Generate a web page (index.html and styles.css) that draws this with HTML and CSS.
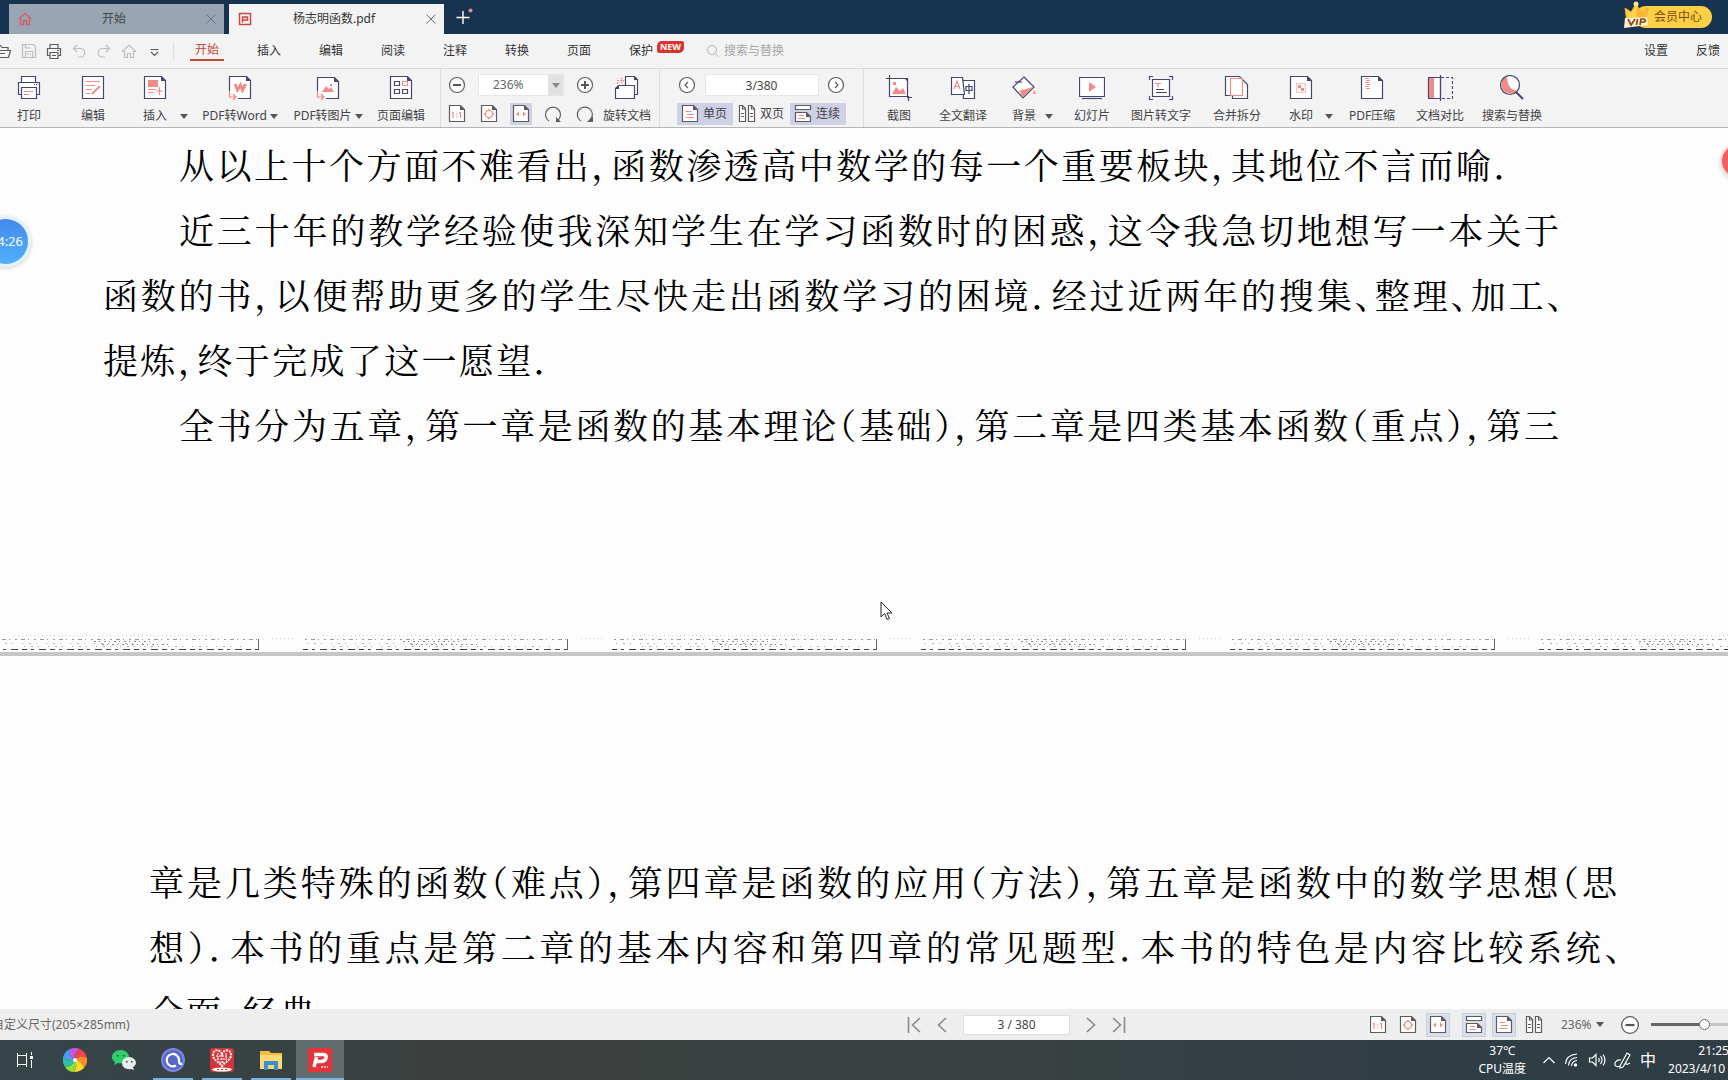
FILE: index.html
```html
<!DOCTYPE html>
<html lang="zh-CN">
<head>
<meta charset="utf-8">
<title>杨志明函数.pdf</title>
<link rel="stylesheet" href="styles.css">
</head>
<body>
<svg class="defs" aria-hidden="true">
  <symbol id="fit-one" viewBox="0 0 18 20"><path class="w g" d="M1.5 1.500h11l4 4v12h-15z"/><path class="gf" d="M12 1v5h5z"/><path class="r" d="M5 8v6M4 9l1-1M12.500 8v6M11.500 9l1-1M8.700 9.500v1M8.700 12.500v1"/></symbol>
  <symbol id="fit-page" viewBox="0 0 18 20"><path class="w g" d="M1.500 1.500h11l4 4v12h-15z"/><path class="gf" d="M12 1v5h5z"/><circle class="r" cx="9" cy="10" r="3.500"/><path class="rf" d="M9 4.500l1.500 2h-3zM9 15.500l1.500-2h-3zM3.500 10l2-1.500v3zM14.500 10l-2-1.500v3z"/></symbol>
  <symbol id="fit-width" viewBox="0 0 18 20"><path class="w g" d="M1.500 1.500h11l4 4v12h-15z"/><path class="gf" d="M12 1v5h5z"/><path class="rf" d="M4 10l3-2.500v5zM14 10l-3-2.500v5z"/></symbol>
  <symbol id="single" viewBox="0 0 18 20"><path class="w g" d="M1.500 1.500h11l4 4v12h-15z"/><path class="gf" d="M12 1v5h5z"/><path class="r" d="M4.500 7.500h6M6 10.500h7M4.500 13.500h8"/></symbol>
  <symbol id="double" viewBox="0 0 18 20"><path class="w g" d="M1.500 1.500h3l3 3v13h-6zM10.500 1.500h3l3 3v13h-6z"/><path class="g" d="M4.500 2v3h3M13.500 2v3h3M3 9.500h3M3 12.500h3M12 9.500h3M12 12.500h3"/></symbol>
  <symbol id="continuous" viewBox="0 0 18 20"><path class="w g" d="M1.500 1.500h15v4h-15zM1.500 8.500h11l4 4v5h-15z"/><path class="gf" d="M12 8v5h5z"/><path class="r" d="M5 11.500h5M4 14.500h7"/></symbol>
  <symbol id="minus" viewBox="0 0 18 18"><circle class="w g" cx="9" cy="9" r="7.500"/><path class="g2" d="M5 9h8"/></symbol>
  <symbol id="plus" viewBox="0 0 18 18"><circle class="w g" cx="9" cy="9" r="7.500"/><path class="g2" d="M5 9h8M9 5v8"/></symbol>
  <symbol id="prev" viewBox="0 0 18 18"><circle class="w g" cx="9" cy="9" r="7.500"/><path class="g" d="M10 6L7 9l3 3"/></symbol>
  <symbol id="next" viewBox="0 0 18 18"><circle class="w g" cx="9" cy="9" r="7.500"/><path class="g" d="M8 6l3 3-3 3"/></symbol>
  <symbol id="close" viewBox="0 0 10 10"><path d="M.5.500l9 9M9.500.500l-9 9" fill="none" stroke="#6a7078"/></symbol>
</svg>

<header class="titlebar">
  <div class="doc-tab doc-tab--home">
    <svg class="doc-tab-icon" viewBox="0 0 14 14"><path d="M1 6.500L7 1.500l6 5M2.500 5.500v7h3v-4h3v4h3v-7" fill="none" stroke="#d8596a" stroke-width="1.300"/></svg>
    <span class="doc-tab-title">开始</span>
    <button class="plain" aria-label="关闭"><svg width="10" height="10"><use href="#close"/></svg></button>
  </div>
  <div class="doc-tab doc-tab--active">
    <svg class="doc-tab-icon" viewBox="0 0 14 14"><rect x="1.500" y="1.500" width="11" height="11" fill="none" stroke="#c94a42" stroke-width="1.500"/><path d="M4.500 10.500v-5.500h5v3h-5" fill="none" stroke="#c94a42" stroke-width="1.500"/></svg>
    <span class="doc-tab-title">杨志明函数.pdf</span>
    <button class="plain" aria-label="关闭"><svg width="10" height="10"><use href="#close"/></svg></button>
  </div>
  <button class="plain new-tab" aria-label="新建标签"><svg width="18" height="18" viewBox="0 0 18 18"><path d="M8 3v13M1.500 9.500h13" stroke="#fff" stroke-width="1.400"/><circle cx="15.500" cy="2.500" r="2" fill="#e58b92"/></svg></button>
  <button class="vip">
    <svg class="vip-crown" viewBox="0 0 26 28"><path d="M2 7l6 4 5-8 5 8 7-4-3 14H4z" fill="#ffd24a" stroke="#f4a92c"/><circle cx="13" cy="3" r="2.500" fill="#ffe48a"/><path d="M14 4l4 8 6-3-3 9h-8z" fill="#f7b734"/><path d="M2 17l22-1 1 8-24 3z" fill="#fff1d6"/><path d="M5 18l3 6 4-6M14.500 18l-1 6M17 24l1-6h3q3 2 0 3h-3" fill="none" stroke="#8a4a12" stroke-width="1.700"/></svg>
    会员中心
  </button>
</header>

<nav class="menubar">
  <div class="quick">
    <button class="plain" aria-label="打开"><svg width="18" height="18" viewBox="0 0 18 18"><path class="g" d="M1.500 15V3.500h5l1.500 2h6V8M1.500 15.500L5 8.500h11.500l-2 7zM6 11.500h5"/></svg></button>
    <button class="plain faded" aria-label="保存"><svg width="16" height="18" viewBox="0 0 16 18"><path class="g" d="M1.500 2.500h11l2 2v11h-13zM4.500 15V9.500h7V15M4.500 3v3h5M6 12h4"/></svg></button>
    <button class="plain" aria-label="打印"><svg width="16" height="18" viewBox="0 0 16 18"><path class="g" d="M4 6V2.500h8V6M4 13.500H1.500v-7h13v7H12M4 10.500h8v6H4zM11 8.500h2M6 13.500h4"/></svg></button>
    <button class="plain faded" aria-label="撤销"><svg width="16" height="18" viewBox="0 0 16 18"><path class="g" d="M6 3L2.500 6.500 6 10M3 6.500h6.500a4 4 0 010 8.500H7"/></svg></button>
    <button class="plain faded" aria-label="重做"><svg width="16" height="18" viewBox="0 0 16 18"><path class="g" d="M10 3l3.500 3.500L10 10M13 6.500H6.500a4 4 0 000 8.500H9"/></svg></button>
    <button class="plain faded" aria-label="主页"><svg width="16" height="18" viewBox="0 0 16 18"><path class="g" d="M1.500 9.500L8 3l6.500 6.500h-2v6h-3v-4h-3v4h-3v-6z"/></svg></button>
    <button class="plain" aria-label="更多"><svg width="16" height="18" viewBox="0 0 16 18"><path class="g" d="M4.500 7.500h8M5 10l3.500 3.500L12 10"/></svg></button>
  </div>
  <div class="menus">
    <button class="menu menu--on"><span>开始</span></button>
    <button class="menu">插入</button>
    <button class="menu">编辑</button>
    <button class="menu">阅读</button>
    <button class="menu">注释</button>
    <button class="menu">转换</button>
    <button class="menu">页面</button>
    <button class="menu">保护<span class="new">NEW</span></button>
  </div>
  <label class="find"><svg width="14" height="14" viewBox="0 0 14 14"><circle cx="6" cy="6" r="4.500" fill="none" stroke="#b4b4b4"/><path d="M9.500 9.500L13 13" stroke="#b4b4b4"/></svg><input type="search" placeholder="搜索与替换" aria-label="搜索与替换"></label>
  <div class="links"><button class="plain">设置</button><button class="plain">反馈</button></div>
</nav>

<section class="toolbar">
  <div class="tools tools--edit">
    <button class="tool"><svg viewBox="0 0 26 26"><path class="w n" d="M5.500 7V1.500h14V7M5.500 19.500h-3v-12h21v12h-3M5.500 12.500h15v11h-15z"/><path class="n" d="M18 9.500h1M20 9.500h1.500"/><path class="r" d="M8 16.500h9M8 19.500h5"/></svg><span>打印</span></button>
    <button class="tool"><svg viewBox="0 0 26 26"><path class="w n" d="M2.500 1.500h21v22h-21z"/><path class="r" d="M6 6.500h14M6 10.500h9M6 14.500h6M6 18.500h4"/><path class="r2" d="M12 19l8-8"/></svg><span>编辑</span></button>
    <button class="tool"><svg viewBox="0 0 26 26"><path class="w n" d="M2.500 1.500h17l4 4v18h-21z"/><path class="nf" d="M19 1v5h5z"/><path class="rf" d="M6 5h10v7H6z"/><path class="r" d="M6 14.500h8M6 17.500h6M17.500 12v8M14 16h7"/></svg><span>插入</span></button>
    <button class="caret" aria-label="插入选项"><i></i></button>
    <button class="tool"><svg viewBox="0 0 26 26"><path class="w n" d="M2.500 16V1.500h17l4 4v18H11"/><path class="nf" d="M19 1v5h5z"/><path class="r3" d="M8 9l2.500 6 3-5 2 5 3-6"/><path class="r" d="M2.500 16v6h6M6 19l3 3-3 3"/></svg><span>PDF转Word<i></i></span></button>
    <button class="tool"><svg viewBox="0 0 26 26"><path class="w n" d="M2.500 16V2.500h17l4 4v17H11"/><path class="nf" d="M19 2v5h5z"/><path class="rf" d="M7 17l4-6 3 3 2-2 3 5zM15 9h2v2h-2z"/><path class="r" d="M2.500 16v6h6M6 19l3 3-3 3"/></svg><span>PDF转图片<i></i></span></button>
    <button class="tool"><svg viewBox="0 0 26 26"><path class="w n" d="M2.500 1.500h17l4 4v18h-21z"/><path class="nf" d="M19 1v5h5z"/><path class="n" d="M6.500 6.500h5v4h-5zM6.500 14.500h5v4h-5zM14.500 14.500h5v4h-5z"/><path class="r" d="M14.500 6.500h5v4h-5z"/></svg><span>页面编辑</span></button>
  </div>
  <div class="zoom">
    <button class="plain" aria-label="缩小"><svg width="18" height="18"><use href="#minus"/></svg></button>
    <span class="zoom-field"><select class="zoom-select" aria-label="缩放比例"><option>236%</option></select><span class="zoom-arrow"><i></i></span></span>
    <button class="plain" aria-label="放大"><svg width="18" height="18"><use href="#plus"/></svg></button>
    <button class="plain" aria-label="实际大小"><svg width="18" height="20"><use href="#fit-one"/></svg></button>
    <button class="plain" aria-label="适合页面"><svg width="18" height="20"><use href="#fit-page"/></svg></button>
    <button class="plain picked" aria-label="适合宽度"><svg width="18" height="20"><use href="#fit-width"/></svg></button>
    <button class="plain" aria-label="逆时针旋转"><svg width="18" height="20" viewBox="0 0 18 20"><path class="g" d="M5 17A7.500 7.500 0 1113 17"/><path class="gf" d="M12 13v5h5z"/></svg></button>
    <button class="plain" aria-label="顺时针旋转"><svg width="18" height="20" viewBox="0 0 18 20"><path class="g" d="M5 17A7.500 7.500 0 1114 16"/><path class="gf" d="M17 12v6h-6z"/></svg></button>
  </div>
  <button class="tool tool--rotate"><svg viewBox="0 0 26 26"><path class="w n" d="M11.500 1.500h9l3 3v15h-12z"/><path class="w n" d="M1.500 13.500l3-3h16v13h-19z"/><path class="nf" d="M20 1v4h4zM1 14h4v-4z"/><path class="r" d="M3.500 9V5.500H9M7 3l2.500 2.500L7 8" stroke-dasharray="2 1"/></svg><span>旋转文档</span></button>
  <div class="paging">
    <div class="paging-row">
      <button class="plain" aria-label="上一页"><svg width="18" height="18"><use href="#prev"/></svg></button>
      <input class="page-input" value="3/380" aria-label="页码">
      <button class="plain" aria-label="下一页"><svg width="18" height="18"><use href="#next"/></svg></button>
    </div>
    <div class="paging-modes">
      <button class="mode picked"><svg width="18" height="20"><use href="#single"/></svg>单页</button>
      <button class="mode mode--plain"><svg width="18" height="20"><use href="#double"/></svg>双页</button>
      <button class="mode picked"><svg width="18" height="20"><use href="#continuous"/></svg>连续</button>
    </div>
  </div>
  <div class="tools tools--more">
    <button class="tool"><svg viewBox="0 0 26 26"><path class="w n" d="M3.500 3.500h18v18h-18z"/><path class="n" d="M3.500 0v4M0 3.500h4M22.500 21v5M21 22.500h5"/><path class="nf" d="M18 3h4v4z"/><path class="rf" d="M6 19l4-7 4 4 3-3 3 6zM7 7h3v3H7z"/></svg><span>截图</span></button>
    <button class="tool"><svg viewBox="0 0 26 26"><path class="w n" d="M12.500 5.500h12v18h-11z"/><path class="w n" d="M1.500 2.500h11l2 17h-13z"/><path class="r" d="M4 14l3-8 3 8M5 11.500h4"/><path class="n" d="M16 11.500h6v4h-6zM19 9v10"/></svg><span>全文翻译</span></button>
    <button class="tool"><svg viewBox="0 0 26 26"><path class="w n" d="M13 2l10 10-11 11L2 12z"/><path class="rf" d="M8 16l14-4-10 10zM23 15l2 4h-3z"/><path class="n" d="M4 7h7"/></svg><span>背景</span></button>
    <button class="caret" aria-label="背景选项"><i></i></button>
    <button class="tool"><svg viewBox="0 0 26 26"><path class="w n" d="M.500 2.500h25v19H.5z"/><path class="n" d="M3 23.500h20"/><path class="rf" d="M10 7l7 5-7 5z"/></svg><span>幻灯片</span></button>
    <button class="tool"><svg viewBox="0 0 26 26"><path class="w n" d="M4.500 4.500h17v17h-17z"/><path class="n" d="M1.500 5V1.500H5M21 1.500h3.500V5M1.500 21v3.500H5M21 24.500h3.500V21M8 14.500h8M8 17.500h11"/><path class="r" d="M7 8.500h6M10 8.500v4"/></svg><span>图片转文字</span></button>
    <button class="tool"><svg viewBox="0 0 26 26"><path class="w n" d="M1.500 1.500h14l8 8v14h-15v-3h-7z"/><path class="r" d="M6.500 3.500h12v17h-12z"/></svg><span>合并拆分</span></button>
    <button class="tool"><svg viewBox="0 0 26 26"><path class="w n" d="M2.500 1.500h17l4 4v18h-21z"/><path class="nf" d="M19 1v5h5z"/><path class="r" stroke-dasharray="1 1" d="M8.500 8.500h9v9h-9z"/><path class="rf" d="M10 10h3v3h-3zM13 13h3v3h-3z"/></svg><span>水印</span></button>
    <button class="caret" aria-label="水印选项"><i></i></button>
    <button class="tool"><svg viewBox="0 0 26 26"><path class="w n" d="M2.500 1.500h17l4 4v18h-21z"/><path class="nf" d="M19 1v5h5z"/><path class="r" d="M6 3.500h4M7 5.500h4M6 7.500h4M7 9.500h4M6 11.500h4M7 13.500h4"/></svg><span>PDF压缩</span></button>
    <button class="tool"><svg viewBox="0 0 26 26"><path class="w n" d="M1.500 2.500h12v21h-12z"/><path class="rf" d="M2 3h5v20H2z"/><path class="n" d="M13.500 0v26"/><path class="n" stroke-dasharray="3 2" d="M14 2.500h11.500v21H14"/></svg><span>文档对比</span></button>
    <button class="tool"><svg viewBox="0 0 26 26"><circle class="w" cx="11" cy="10" r="9"/><path class="rf" d="M5 3a9 9 0 0013 13Q8 14 8 2z"/><circle class="n" cx="11" cy="10" r="9.500"/><path class="n2" d="M17 17l7 7"/></svg><span>搜索与替换</span></button>
  </div>
</section>

<main class="viewer">
  <article class="sheet sheet--first">
    <div class="column">
      <p class="line line--indent line--short">从以上十个方面不难看出，函数渗透高中数学的每一个重要板块，其地位不言而喻．</p>
      <p class="line line--indent">近三十年的教学经验使我深知学生在学习函数时的困惑，这令我急切地想写一本关于</p>
      <p class="line line--hang">函数的书，以便帮助更多的学生尽快走出函数学习的困境．经过近两年的搜集、整理、加工、</p>
      <p class="line line--third">提炼，终于完成了这一愿望．</p>
      <p class="line line--indent">全书分为五章，第一章是函数的基本理论（基础），第二章是四类基本函数（重点），第三</p>
    </div>
    <svg class="scan-edge" aria-hidden="true">
      <defs><pattern id="scan" width="309" height="18" patternUnits="userSpaceOnUse" x="-6">
        <path d="M0 15.500h264" stroke="#444" stroke-dasharray="5 4 3 5 7 4"/>
        <path d="M2 5.500h262" stroke="#999" stroke-dasharray="2 4 4 3 1 5"/>
        <path d="M4 9.500h150M30 12.500h220" stroke="#aaa" stroke-dasharray="1 6 2 5 1 9"/>
        <path d="M100 7.500h60M108 10.500h70" stroke="#888" stroke-dasharray="2 3 1 4"/>
        <path d="M264.500 5v11" stroke="#666"/><path d="M278 4.500h22M20 1.500h200" stroke="#ccc" stroke-dasharray="1 3"/>
      </pattern></defs>
      <rect width="100%" height="18" fill="url(#scan)"/>
    </svg>
  </article>
  <article class="sheet sheet--second">
    <div class="column column--second">
      <p class="line">章是几类特殊的函数（难点），第四章是函数的应用（方法），第五章是函数中的数学思想（思</p>
      <p class="line line--hang">想）．本书的重点是第二章的基本内容和第四章的常见题型．本书的特色是内容比较系统、</p>
      <p class="line line--stub">全面，经典</p>
    </div>
  </article>
  <div class="timer">14:26</div>
  <div class="record"></div>
  <svg class="pointer" viewBox="0 0 14 20" aria-hidden="true"><path d="M1 1v15l3.500-3.500L7 18.500l2.500-1L7 12h5z" fill="#fff" stroke="#222"/></svg>
</main>

<footer class="status">
  <span class="status-size">自定义尺寸(205×285mm)</span>
  <div class="status-nav">
    <button class="plain" aria-label="首页"><svg width="14" height="18" viewBox="0 0 14 18"><path class="c" d="M1.500 1v16M13 2L5.500 9l7.500 7"/></svg></button>
    <button class="plain" aria-label="上一页"><svg width="12" height="18" viewBox="0 0 12 18"><path class="c" d="M10 2L2.500 9l7.500 7"/></svg></button>
    <input class="status-input" value="3 / 380" aria-label="当前页">
    <button class="plain" aria-label="下一页"><svg width="12" height="18" viewBox="0 0 12 18"><path class="c" d="M2 2l7.500 7L2 16"/></svg></button>
    <button class="plain" aria-label="末页"><svg width="14" height="18" viewBox="0 0 14 18"><path class="c" d="M12.500 1v16M1 2l7.500 7L1 16"/></svg></button>
  </div>
  <div class="status-view">
    <div class="status-icons">
      <button class="plain" aria-label="实际大小"><svg width="18" height="20"><use href="#fit-one"/></svg></button>
      <button class="plain" aria-label="适合页面"><svg width="18" height="20"><use href="#fit-page"/></svg></button>
      <button class="plain lit" aria-label="适合宽度"><svg width="18" height="20"><use href="#fit-width"/></svg></button>
    </div>
    <div class="status-icons">
      <button class="plain lit" aria-label="连续"><svg width="18" height="20"><use href="#continuous"/></svg></button>
      <button class="plain lit" aria-label="单页"><svg width="18" height="20"><use href="#single"/></svg></button>
      <button class="plain" aria-label="双页"><svg width="18" height="20"><use href="#double"/></svg></button>
    </div>
    <button class="plain status-zoom">236%<i></i></button>
    <button class="plain" aria-label="缩小"><svg width="20" height="20"><use href="#minus"/></svg></button>
    <input class="slider" type="range" value="50" aria-label="缩放">
  </div>
</footer>

<div class="taskbar">
  <div class="apps">
    <button class="app app--view" aria-label="任务视图"><svg viewBox="0 0 24 24"><path d="M4.500 5v2.500h9V5M4.500 19v-2.500h9V19M4.500 7.500v9M13.500 7.500v9M18.500 4v3M18.500 12v8" fill="none" stroke="#fff"/><path d="M17 8h3v3h-3z" fill="#fff"/></svg></button>
    <button class="app" aria-label="浏览器"><svg viewBox="0 0 24 24"><path d="M12 12Q5 8 7 1 12-1 17 1 10 5 12 12z" fill="#c455e8"/><path d="M12 12Q10 5 17 1q6 3 7 9-7-4-12 2z" fill="#f0434f"/><path d="M12 12q5-6 12-2 1 6-3 10-2-7-9-8z" fill="#ff8a2a"/><path d="M12 12q7 1 9 8-4 4-10 4 4-6 1-12z" fill="#ffd62e"/><path d="M12 12q3 6-1 12-6 0-9-5 7 0 10-7z" fill="#8fdc3a"/><path d="M12 12q-3 7-10 7-3-5-2-10 5 6 12 3z" fill="#27c6a0"/><path d="M12 12Q5 15 0 9q2-6 7-8-2 7 5 11z" fill="#4c9bf5"/><circle cx="12" cy="12" r="2" fill="#fff"/></svg></button>
    <button class="app" aria-label="微信"><svg viewBox="0 0 24 24"><path d="M8.500 2C4 2 0 5 0 9c0 2 1 4 3 5l-1 3 4-2c5 1 11-1 11-6 0-4-4-7-8.500-7z" fill="#2fd06b"/><path d="M17 9c-4 0-7 3-7 6 0 4 4 7 9 6l3 1-1-3c2-1 3-3 3-4 0-3-3-6-7-6z" fill="#e9ecec"/><path d="M5 7h1.500v1.500H5zM11 7h1.500v1.500H11zM14 13h1.500v1.500H14zM19 13h1.500v1.500H19z" fill="#1d4a35"/></svg></button>
    <button class="app app--open" aria-label="录屏"><svg viewBox="0 0 24 24"><circle cx="12" cy="12" r="12" fill="#7c88dd"/><circle cx="12" cy="12" r="10" fill="#5667cc"/><path d="M15 17.500A6.200 6.200 0 1118 13q0 4 3 2.500" fill="none" stroke="#fff" stroke-width="2.200"/></svg></button>
    <button class="app app--open" aria-label="数学"><svg viewBox="0 0 24 24"><rect width="24" height="24" rx="3" fill="#d2343a"/><path d="M12 6C10 1 3 1 3 7c0 5 6 7 9 11 3-4 9-6 9-11 0-6-7-6-9-1z" fill="none" stroke="#fff" stroke-width="2" stroke-dasharray="2 1"/><path d="M6 8h12M7 11h10M9 14h6M8 5v7M12 7v9M16 5v7" stroke="#fff" stroke-dasharray="2 1"/><ellipse cx="12" cy="21.500" rx="10" ry="2" fill="#fff"/><path d="M7 21.500h10" stroke="#d2343a" stroke-dasharray="2 2"/></svg></button>
    <button class="app app--open" aria-label="文件资源管理器"><svg viewBox="0 0 24 24"><path d="M1 3h9l2 2h11v16H1z" fill="#f4bd3f"/><path d="M1 7h22v14H1z" fill="#fbd975"/><path d="M5 13h14v9h-4v-5H9v5H5z" fill="#3f8fd0"/></svg></button>
    <button class="app app--current" aria-label="PDF 编辑器"><svg viewBox="0 0 24 24"><rect width="24" height="24" rx="2" fill="#e5353b"/><path d="M6 6.500h9q4 0 3 3.500t-5 3.500H9" fill="none" stroke="#fff" stroke-width="3.500"/><path d="M8.500 9L6 19" stroke="#fff" stroke-width="3.500"/><path d="M13 19h7" stroke="#fbb" stroke-width="2" stroke-dasharray="2 1"/></svg></button>
  </div>
  <div class="tray">
    <div class="temp"><span>37℃</span><span>CPU温度</span></div>
    <div class="tray-icons">
      <button class="plain" aria-label="显示隐藏图标"><svg width="14" height="20" viewBox="0 0 14 20"><path class="t" d="M1.500 13L7 7.500l5.500 5.500"/></svg></button>
      <button class="plain" aria-label="网络"><svg width="16" height="20" viewBox="0 0 16 20"><path class="t" d="M1.500 14Q2 5 13 4M4.500 15.500Q5 8 13 7.500M7.500 16Q8 11 13 10.500"/><circle cx="11.500" cy="15" r="1.700" fill="#fff"/></svg></button>
      <button class="plain" aria-label="音量"><svg width="18" height="20" viewBox="0 0 18 20"><path class="t" d="M1.500 8h3l3.500-3.500v11L4.500 12h-3zM10.500 8q1.500 2 0 4M12.500 6q3 4 0 8M15 4.500q4 5.500 0 11"/></svg></button>
      <button class="plain" aria-label="手写笔"><svg width="18" height="20" viewBox="0 0 18 20"><path class="t" d="M6 16L13 3l3 2-7 12-3 1zM7 10c-8-1-8 9-1 6M12 12q-1 4 4 1"/></svg></button>
      <button class="plain ime">中</button>
    </div>
    <div class="clock"><time>21:25</time><time class="date">2023/4/10</time></div>
  </div>
</div>
</body>
</html>
```
FILE: styles.css
```css
* { box-sizing: border-box; }
body {
  margin: 0;
  height: 100vh;
  display: flex;
  flex-direction: column;
  overflow: hidden;
  background: #f3f3f4;
  color: #444;
  font: 12px/16px "Noto Sans", "Noto Sans CJK SC", sans-serif;
}
button, input, select { font: inherit; color: inherit; margin: 0; padding: 0; border: 0; background: none; }
button { white-space: nowrap; }
svg { display: block; flex: none; }
.defs { position: absolute; width: 0; height: 0; }
.plain { display: flex; align-items: center; justify-content: center; }

/* icon strokes and fills */
.g, .n, .r { fill: none; stroke: #5c5c5c; stroke-width: 1.2; }
.n { stroke: #45466f; }
.r { stroke: #ee8d88; }
.w { fill: #fff; }
.gf { fill: #5c5c5c; }
.nf { fill: #45466f; }
.rf { fill: #f08c87; }
.g2 { fill: none; stroke: #555; stroke-width: 2; }
.n2 { fill: none; stroke: #45466f; stroke-width: 2; }
.r2 { stroke: #ee8d88; stroke-width: 2; }
.r3 { fill: none; stroke: #ee8d88; stroke-width: 3; }
.c { fill: none; stroke: #858585; stroke-width: 1.5; }
.t { fill: none; stroke: #fff; stroke-width: 1.2; }
i { display: inline-block; border: 4px solid transparent; border-top: 5px solid #555; border-bottom: 0; }

/* title bar */
.titlebar { flex: none; height: 34px; display: flex; align-items: flex-end; gap: 5px; padding: 0 16px 0 9px; background: #18334f; }
.doc-tab { width: 215px; height: 30px; display: flex; align-items: center; padding: 0 8px 0 9px; }
.doc-tab--home { background: #98a5b2; }
.doc-tab--active { background: #f3f3f4; color: #333; }
.doc-tab-icon { width: 14px; height: 14px; }
.doc-tab-title { flex: 1; padding-right: 10px; text-align: center; }
.new-tab { align-self: center; margin-left: 6px; }
.vip { position: relative; align-self: flex-start; margin: 6px 0 0 auto; height: 22px; padding: 0 10px 0 19px; border-radius: 11px; background: #fbd044; color: #7a4a10; }
.vip-crown { position: absolute; left: -12px; top: -5px; width: 26px; height: 28px; }

/* menu bar */
.menubar { flex: none; height: 35px; display: flex; align-items: center; border-bottom: 1px solid #d9d9dc; color: #333; }
.quick { display: flex; gap: 9px; width: 180px; margin-right: 2px; margin-left: -6px; border-right: 1px solid #dcdcdf; }
.faded { opacity: .35; }
.menus { display: flex; }
.menu { position: relative; width: 62px; height: 34px; }
.menu--on { color: #c4473b; }
.menu--on span { display: inline-block; padding: 0 5px 1px; border-bottom: 2px solid #c4473b; }
.new { position: absolute; left: 47px; top: 7px; padding: 0 3px; border-radius: 5px 2px; background: #d8342c; color: #fff; font-weight: 700; font-size: 9px; line-height: 12px; }
.find { display: flex; align-items: center; gap: 4px; margin-left: 34px; }
.find input { width: 120px; outline: 0; }
.find input::placeholder { color: #a6a6a6; opacity: 1; }
.links { display: flex; gap: 28px; margin-left: auto; padding-right: 8px; }

/* toolbar */
.toolbar { flex: none; height: 59px; display: flex; border-bottom: 1px solid #b5b5b8; }
.tools { display: grid; padding-top: 6px; align-items: start; }
.tools--edit { grid-template-columns: 54px 74px 50px 16px 88px 88px 58px; padding-left: 2px; width: 440px; }
.tools--more { grid-template-columns: 48px 80px 42px 14px 66px 72px 80px 48px 12px 70px 66px 78px; padding-left: 11px; }
.tool { display: flex; flex-direction: column; align-items: center; gap: 8px; }
.tool svg { width: 26px; height: 26px; }
.tool span { display: flex; align-items: center; gap: 3px; line-height: 14px; }
.caret { display: flex; padding-top: 39px; }
.zoom { display: grid; grid-template-columns: repeat(5, 32px); grid-template-rows: 22px 22px; row-gap: 7px; align-items: center; padding-top: 5px; border-left: 1px solid #dedee1; }
.zoom > * { justify-self: center; }
.zoom-field { grid-column: span 3; width: 86px; height: 22px; display: flex; border: 1px solid #e6e6e8; background: #fff; }
.zoom-select { flex: 1; appearance: none; padding-left: 14px; color: #666; }
.zoom-arrow { width: 15px; display: flex; align-items: center; justify-content: center; background: #e1e1e3; }
.zoom-arrow i { border-top-color: #888; }
.picked { background: #ced0e6; }
.zoom .picked { width: 22px; height: 22px; }
.tool--rotate { width: 58px; padding: 6px 6px 0 0; justify-content: flex-start; }
.paging { display: flex; flex-direction: column; gap: 7px; width: 205px; padding: 5px 17px 0; border: solid #dedee1; border-width: 0 1px; }
.paging-row { display: flex; align-items: center; justify-content: space-between; padding: 0 1px; }
.page-input { width: 114px; height: 22px; border: 1px solid #e6e6e8; background: #fff; text-align: center; color: #444; }
.paging-modes { display: flex; justify-content: space-between; }
.mode { display: flex; align-items: center; gap: 4px; width: 56px; height: 22px; padding: 0 4px; }
.mode--plain { width: 47px; padding: 0; }

/* document: punctuation is set at half width, and lines fill the measure */
.viewer { position: relative; flex: 1; min-height: 0; overflow: hidden; background: #fdfdfd; color: #000; }
.sheet { position: relative; }
.sheet--first { height: 528px; padding-top: 4px; border-bottom: 4px solid #c6c6c6; }
.column { width: 1456px; margin-left: 103px; font: 400 35px/65px "Noto Serif CJK SC", "Noto Sans CJK SC", serif; font-feature-settings: "halt"; }
.column--second { width: 1468px; margin-left: 149px; padding-top: 193px; }
.line { margin: 0; text-align: justify; text-align-last: justify; white-space: nowrap; }
.line--indent { padding-left: 76px; }
.line--short { padding-right: 48px; }
.line--hang { margin-right: -5px; }
.line--third { width: 448px; }
.line--stub { width: 166px; }
.scan-edge { position: absolute; left: 0; bottom: 0; width: 100%; height: 18px; }
.timer { position: absolute; left: -20px; top: 88px; width: 51px; height: 51px; padding-right: 5px; border: 3px solid #e3f2fd; border-radius: 50%; background: linear-gradient(#4488ee, #50b0fb); box-shadow: 0 1px 4px #0003; color: #fff; font-size: 13px; line-height: 45px; text-align: right; }
.record { position: absolute; right: -28px; top: 15px; width: 36px; height: 36px; border: 2px solid #fbd9d9; border-radius: 50%; background: #ee5f5f; box-shadow: 0 2px 4px #0002; }
.pointer { position: absolute; left: 880px; top: 473px; width: 14px; height: 20px; }

/* status bar */
.status { flex: none; height: 31px; display: flex; align-items: center; overflow: hidden; background: #eee; color: #666; }
.status-size { flex: 1; margin-left: -8px; }
.status-nav { display: flex; align-items: center; justify-content: space-between; width: 219px; margin-right: 244px; }
.status-input { width: 107px; height: 20px; border: 1px solid #e0e0e0; background: #fff; text-align: center; color: #444; }
.status-view { width: 358px; display: flex; align-items: center; overflow: hidden; }
.status-icons { display: flex; gap: 6px; margin: 0 12px 0 -4px; }
.status-icons + .status-icons { margin-left: 0; }
.status-icons .plain { width: 24px; height: 24px; }
.status-icons .lit { background: #dadfec; border: 1px solid #c6cde0; }
.status-zoom { gap: 4px; margin: 0 16px 0 3px; }
.slider { flex: none; width: 108px; height: 12px; margin-left: 11px; appearance: none; }
.slider::-webkit-slider-runnable-track { height: 3px; background: linear-gradient(90deg, #666 50%, #c4c8cc 50%); }
.slider::-webkit-slider-thumb { appearance: none; width: 11px; height: 11px; margin-top: -4px; border: 1px solid #666; border-radius: 50%; background: #fff; }

/* desktop taskbar */
.taskbar { flex: none; height: 40px; display: flex; justify-content: space-between; overflow: hidden; background: linear-gradient(90deg, #35454a, #3b403f 25%, #3b4241 55%, #2f3d45 85%); color: #fff; }
.apps { display: flex; gap: 1px; }
.app { width: 48px; display: flex; align-items: center; justify-content: center; }
.app--view { width: 50px; }
.app svg { width: 24px; height: 24px; }
.app--open { background: linear-gradient(#7fb2de, #7fb2de) center bottom / 40px 2px no-repeat; }
.app--current { background: linear-gradient(#7fb2de, #7fb2de) center bottom / 48px 2px no-repeat #626b6e; }
.tray { display: flex; align-items: center; margin-right: -1px; }
.temp { display: flex; flex-direction: column; align-items: center; line-height: 18px; margin-right: 16px; }
.tray-icons { display: flex; align-items: center; gap: 8px; margin-right: 12px; }
.ime { font-size: 16px; line-height: 20px; }
.clock { display: flex; flex-direction: column; align-items: flex-end; line-height: 18px; }
.date { padding-right: 4px; }
```
